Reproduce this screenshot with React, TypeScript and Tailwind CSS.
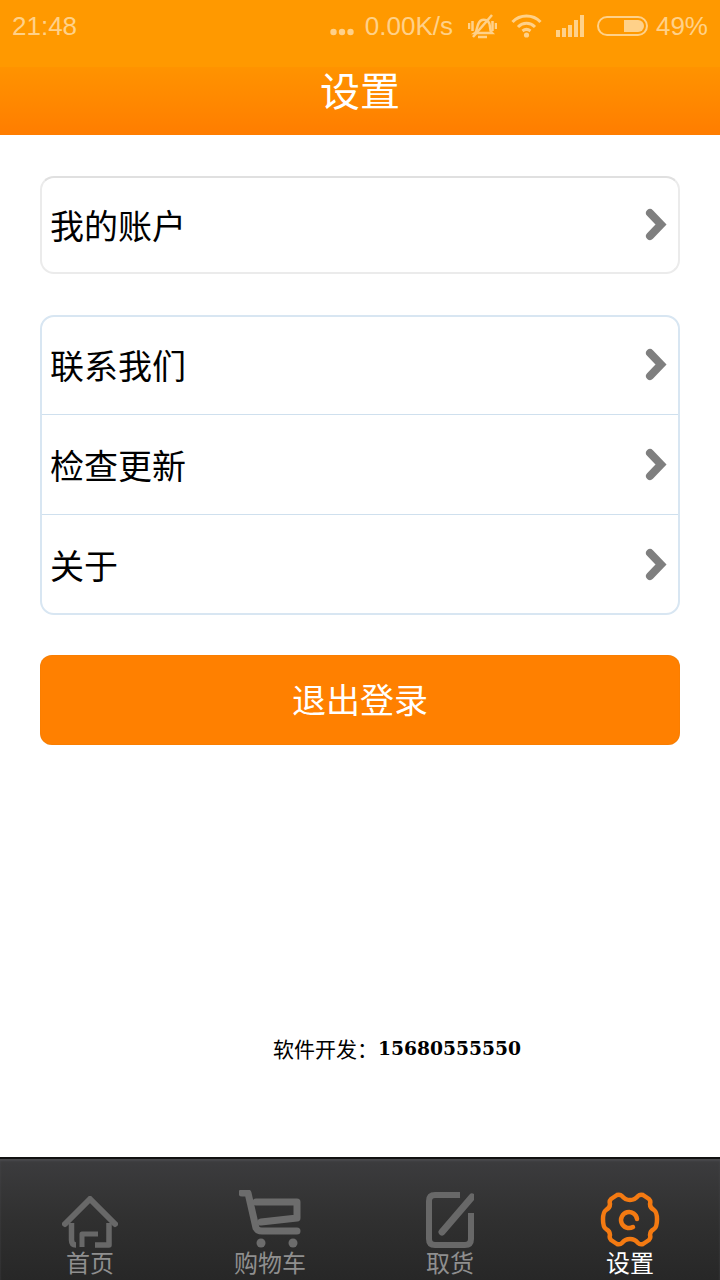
const cjk = "font-['Roboto','Noto_Sans_CJK_SC',sans-serif]";

function Chevron() {
  return (
    <svg width="24" height="34" viewBox="0 0 24 34" className="shrink-0">
      <path d="M5 5 L16 16.5 L5 28" fill="none" stroke="#7f7f7f" strokeWidth="8" strokeLinecap="round" strokeLinejoin="miter" />
    </svg>
  );
}

function Row({ label, className }: { label: string; className: string }) {
  return (
    <div className={`flex items-center justify-between pl-[8px] pr-[9px] ${className}`}>
      <span className={`pt-[4px] text-[34px] leading-none text-black ${cjk}`}>{label}</span>
      <Chevron />
    </div>
  );
}

function StatusBar() {
  return (
    <div className="flex h-[67px] items-center justify-between bg-[#ff9900] pb-[15px] pl-[12px] pr-[12px] text-[26px] leading-none text-[#ffd189] font-['Liberation_Sans',sans-serif]">
      <span>21:48</span>
      <div className="flex items-center">
        <svg width="24" height="8" viewBox="0 0 24 8" className="mt-[12px]" fill="#ffd189">
          <circle cx="3.5" cy="4" r="3.2" />
          <circle cx="12" cy="4" r="3.2" />
          <circle cx="20.5" cy="4" r="3.2" />
        </svg>
        <span className="ml-[11px]">0.00K/s</span>
        <svg width="29" height="25" viewBox="0 0 29 25" className="ml-[15px]" fill="none" stroke="#ffd189" strokeWidth="2.5">
          <path d="M7 19 C10 17 8 8 14 6 C20 5 22 9 22 13 C22 16 23 18 24 19 Z" />
          <path d="M10 23 H19" />
          <path d="M5 23 L24 1" />
          <path d="M1 9 V15 M4.5 7 V17 M24.5 7 V17 M28 9 V15" />
        </svg>
        <svg width="31" height="24" viewBox="0 0 31 24" className="ml-[14px]" fill="none" stroke="#ffd189" strokeWidth="3">
          <path d="M1.5 8 C9 0 22 0 29.5 8" />
          <path d="M7 13 C12 8 19 8 24 13" />
          <path d="M11.5 17 C14 15 17 15 19.5 17" />
          <circle cx="15.5" cy="21" r="2.6" fill="#ffd189" stroke="none" />
        </svg>
        <svg width="28" height="22" viewBox="0 0 28 22" className="ml-[14px]" fill="#ffd189">
          <rect x="0" y="15" width="4" height="7" />
          <rect x="6" y="13" width="4" height="9" />
          <rect x="12" y="10" width="4" height="12" />
          <rect x="18" y="5" width="4" height="17" />
          <rect x="24" y="0" width="4" height="22" />
        </svg>
        <svg width="51" height="20" viewBox="0 0 51 20" className="ml-[13px]">
          <rect x="1" y="1" width="49" height="18" rx="9" fill="none" stroke="#ffd189" strokeWidth="2" />
          <path d="M27 4 H41 A6 6 0 0 1 41 16 H27 Z" fill="#ffd189" />
        </svg>
        <span className="ml-[8px]">49%</span>
      </div>
    </div>
  );
}

function HomeIcon() {
  return (
    <svg width="56" height="52" viewBox="0 0 56 52" fill="none" stroke="#686868" strokeWidth="6" strokeLinejoin="round" className="blur-[0.6px]">
      <path d="M3 28 L28 3 L53 28" strokeLinecap="round" />
      <path d="M9.5 27 V44 Q9.5 49 14 49" strokeWidth="5.5" />
      <path d="M20 51 V38 H36" strokeWidth="5" />
      <path d="M47 27 V49 H33" strokeWidth="5.5" />
    </svg>
  );
}

function CartIcon() {
  return (
    <svg width="62" height="58" viewBox="0 0 62 58" fill="none" stroke="#6c6c6c" strokeLinecap="round" strokeLinejoin="round" strokeWidth="7" className="blur-[0.6px]">
      <path d="M3 3 H9 L17 38 C18 40 20 41 23 41 H58" />
      <path d="M17 12 H58 V28 L22 32" />
      <circle cx="22" cy="53" r="4.5" fill="#6c6c6c" stroke="none" />
      <circle cx="54" cy="53" r="4.5" fill="#6c6c6c" stroke="none" />
    </svg>
  );
}

function PickupIcon() {
  return (
    <svg width="48" height="56" viewBox="0 0 48 56" fill="none" stroke="#686868" strokeWidth="6" strokeLinecap="round" className="blur-[0.6px]">
      <path d="M34 3 H9 C5 3 3 5 3 9 V47 C3 51 5 53 9 53 H39 C43 53 45 51 45 47 V21" strokeLinecap="butt" />
      <path d="M16 40 L46 5" strokeWidth="7" />
    </svg>
  );
}

function GearIcon() {
  return (
    <svg width="60" height="56" viewBox="0 0 60 56" fill="none" stroke="#f47a12" strokeWidth="4.5" strokeLinejoin="round" className="blur-[0.4px]">
      <path d="M30 8 Q35 8 38 4 Q40 2 43 3 L49 7 Q51 9 50 12 Q50 16 54 18 Q57 20 57 27.5 Q57 35 54 37 Q50 39 50 43 Q51 46 49 48 L43 52 Q40 53 38 51 Q35 47 30 47 Q25 47 22 51 Q20 53 17 52 L11 48 Q9 46 10 43 Q10 39 6 37 Q3 35 3 27.5 Q3 20 6 18 Q10 16 10 12 Q9 9 11 7 L17 3 Q20 2 22 4 Q25 8 30 8 Z" />
      <path d="M37 27 A8 8 0 1 0 33 35" strokeLinecap="round" strokeWidth="4.5" />
    </svg>
  );
}

function Tab({ icon, label, active }: { icon: React.ReactNode; label: string; active?: boolean }) {
  return (
    <div className="flex h-full flex-1 flex-col items-center justify-end pb-[2px]">
      <div className="flex h-[60px] items-end">{icon}</div>
      <span className={`mt-[2px] h-[28px] text-[24px] leading-[28px] ${cjk} ${active ? 'text-white' : 'text-[#8f8f8f]'}`}>{label}</span>
    </div>
  );
}

export default function App() {
  return (
    <div className="flex h-[1280px] w-[720px] flex-col overflow-hidden bg-white">
      <StatusBar />
      <div className={`flex h-[68px] items-center justify-center bg-gradient-to-b from-[#ff9300] to-[#ff7d00] pb-[16px] text-[40px] leading-none text-white ${cjk}`}>
        设置
      </div>

      <div className="flex-1 px-[40px] pt-[41px]">
        <div className="h-[98px] rounded-[14px] border-2 border-[#ebebeb] border-t-[#e0e0e0]">
          <Row label="我的账户" className="h-full" />
        </div>

        <div className="mt-[41px] h-[300px] rounded-[14px] border-2 border-[#d8e6f2]">
          <div className="-mt-[2px]">
            <Row label="联系我们" className="h-[100px] border-b border-[#cfe0ee]" />
            <Row label="检查更新" className="h-[100px] border-b border-[#cfe0ee]" />
            <Row label="关于" className="h-[100px]" />
          </div>
        </div>

        <button className={`mt-[40px] flex h-[90px] w-full items-center justify-center rounded-[12px] bg-[#ff8000] pt-[2px] text-[34px] leading-none text-white shadow-[inset_0_0_1px_rgba(170,100,0,0.5)] ${cjk}`}>
          退出登录
        </button>

        <p className="mt-[290px] flex items-center pl-[233px] text-black">
          <span className="text-[21px] leading-[26px] font-['Noto_Sans_CJK_SC',serif]">软件开发{'\uFF1A'}</span>
          <span className="text-[18.7px] font-bold leading-[26px] font-['DejaVu_Serif',serif]">15680555550</span>
        </p>
      </div>

      <div className="flex h-[123px] border-t-2 border-[#111111] bg-gradient-to-b from-[#3c3c3e] via-[#303030] to-[#272727] shadow-[inset_0_2px_2px_#4a4a4d]">
        <Tab icon={<HomeIcon />} label="首页" />
        <Tab icon={<CartIcon />} label="购物车" />
        <Tab icon={<PickupIcon />} label="取货" />
        <Tab icon={<GearIcon />} label="设置" active />
      </div>
    </div>
  );
}
